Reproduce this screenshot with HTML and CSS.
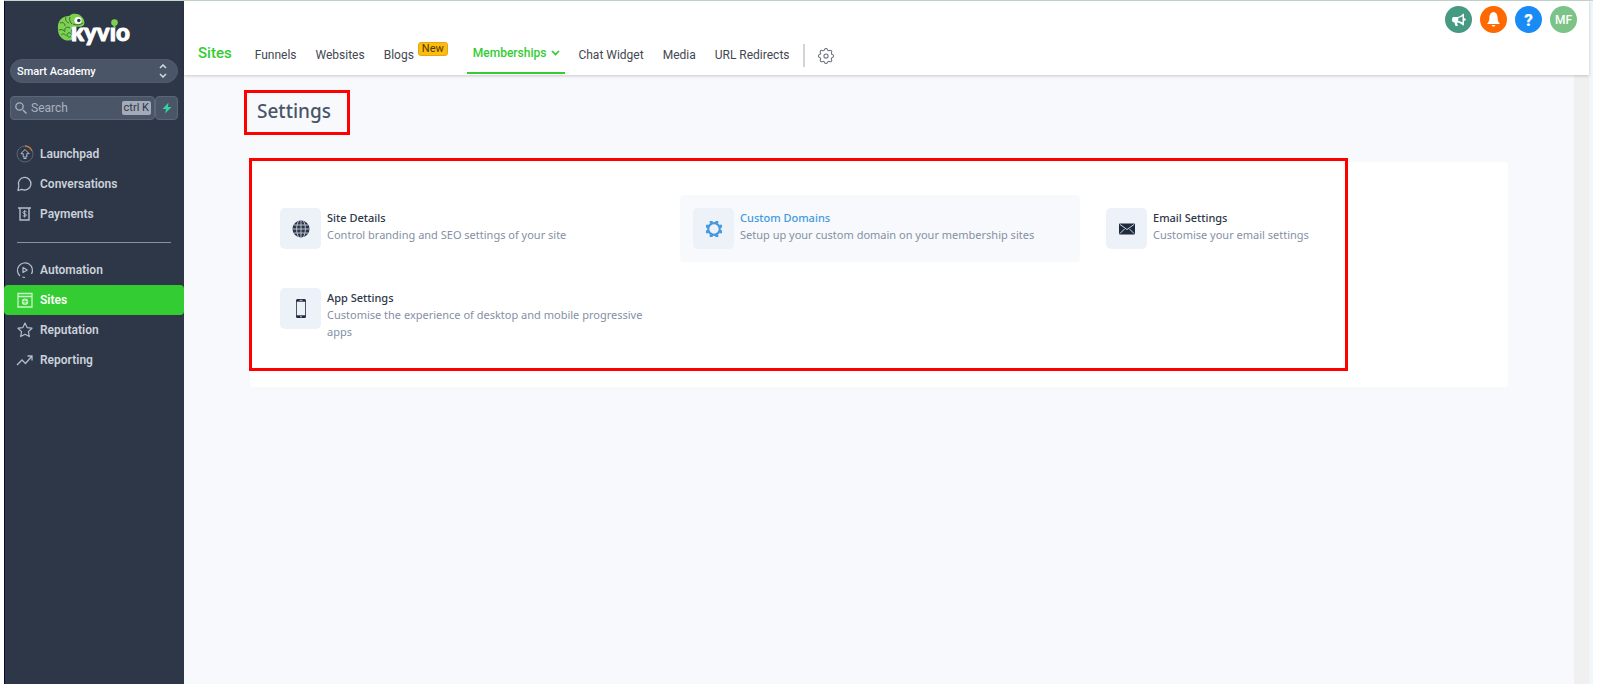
FILE: index.html
```html
<!DOCTYPE html>
<html lang="en">
<head>
<meta charset="utf-8">
<meta name="viewport" content="width=device-width, initial-scale=1">
<title>Kyvio – Settings</title>
<link rel="stylesheet" href="styles.css">
</head>
<body>
<div class="app">
  <aside class="sidebar">
    <a class="logo" href="#" aria-label="kyvio home">
      <svg width="76" height="36" viewBox="0 0 76 36">
        <path d="M14 3C5 2 0 8 1 16c0 5 2 8 5 10 3 2 7 2 10 0l-2-9 5-4z" fill="#7fd04f"/>
        <path d="M3 10c3-1 5 0 5 3M9 4c-1 3 0 5 3 6M2 17c3-1 5 0 6 2M13 15c-3-2-6 0-5 3M4 22c2-2 4-1 5 1M15 22c-1-3-5-3-5 0 0 2 3 3 4 1" fill="none" stroke="#37703d" stroke-width="1"/>
        <text class="logo-text" x="14" y="28">kyvio</text>
        <path d="M12 3l3-2c4-1 8 0 10 3 2 2 3 5 2 8-2 2-5 2-8 1.500L12 14z" fill="#7fd04f"/>
        <path d="M16 11c4 1.500 7 1 10-1M13 4c-1 3 0 5 2 7" fill="none" stroke="#37703d" stroke-width="1"/>
        <circle cx="21" cy="7.500" r="3.600" fill="#fff"/><circle cx="21.800" cy="7.500" r="1.800" fill="#2d3748"/>
        <rect class="logo-mask" x="52" y="7" width="11" height="7"/>
        <circle cx="57.500" cy="9.500" r="3.300" fill="#7fd04f"/><path d="M57.500 11v4" stroke="#7fd04f" stroke-width="2"/>
      </svg>
    </a>
    <div class="account">
      <select class="account-select" aria-label="Account"><option>Smart Academy</option></select>
      <svg class="account-arrows" width="8" height="14" viewBox="0 0 8 14"><path d="M1 4l3-3 3 3M1 10l3 3 3-3" fill="none" stroke="currentColor" stroke-width="1.5"/></svg>
    </div>
    <div class="search-row">
      <label class="search">
        <svg width="12" height="12" viewBox="0 0 12 12"><path d="M8 8l3.500 3.500" stroke="currentColor" stroke-width="1.500"/><circle cx="4.500" cy="4.500" r="3.700" fill="none" stroke="currentColor" stroke-width="1.300"/></svg>
        <input class="search-input" type="text" placeholder="Search" aria-label="Search">
        <kbd class="shortcut">ctrl K</kbd>
      </label>
      <button class="bolt" type="button" aria-label="Quick actions">
        <svg width="10" height="12" viewBox="0 0 10 12"><path d="M6.500.5L.5 7h3.500l-.8 4.500L9.500 5H6z" fill="#34d399"/></svg>
      </button>
    </div>
    <nav class="menu" aria-label="Main">
      <a class="menu-item" href="#">
        <svg width="18" height="18" viewBox="0 0 18 18" fill="none"><circle cx="9" cy="9" r="8" stroke="#5a6475"/><path d="M9 1a8 8 0 0 1 7 5" stroke="#c47a3e" stroke-width="1.300"/><path d="M9 4.500L4.800 8.700h2.400v3.300h3.600V8.700h2.400zM7.500 13.500h3" stroke="currentColor"/></svg>
        Launchpad</a>
      <a class="menu-item" href="#">
        <svg width="18" height="18" viewBox="0 0 18 18" fill="none"><path d="M2 15.500l.8-4.500a6.300 6.300 0 1 1 3 3.300z" stroke="currentColor" stroke-width="1.300" stroke-linejoin="round"/></svg>
        Conversations</a>
      <a class="menu-item" href="#">
        <svg width="18" height="18" viewBox="0 0 18 18" fill="none"><path d="M2 3h13M4 3v12h9V3" stroke="currentColor" stroke-width="1.400"/><path d="M10.500 6.800c-1-.9-3.600-.6-3.600.8 0 1.600 3.500.8 3.500 2.400 0 1.400-2.500 1.600-3.600.6M8.600 5.200v7.200" stroke="currentColor"/></svg>
        Payments</a>
      <hr class="menu-rule">
      <a class="menu-item" href="#">
        <svg width="18" height="18" viewBox="0 0 18 18" fill="none"><path d="M4 15A7.500 7.500 0 1 1 15.500 13M6.500 16.200l2.500.3" stroke="currentColor" stroke-width="1.200"/><path d="M7 6.500v5l4.200-2.500z" stroke="currentColor" stroke-width="1.200" stroke-linejoin="round"/></svg>
        Automation</a>
      <a class="menu-item active" href="#" aria-current="page">
        <svg width="18" height="18" viewBox="0 0 18 18" fill="none"><path d="M2 2.500h14v13.500H2zM2 5.500h14" stroke="currentColor" stroke-width="1.300"/><circle cx="9" cy="10.700" r="3.200" fill="currentColor"/><path d="M6.500 10.700h5M9 8.500v4.400" stroke="#3c3" stroke-width=".8"/></svg>
        Sites</a>
      <a class="menu-item" href="#">
        <svg width="18" height="18" viewBox="0 0 18 18" fill="none"><path d="M9 2l2.100 4.600 4.900.6-3.600 3.400.9 5L9 13.200l-4.300 2.400.9-5L2 7.200l4.900-.6z" stroke="currentColor" stroke-width="1.200" stroke-linejoin="round"/></svg>
        Reputation</a>
      <a class="menu-item" href="#">
        <svg width="18" height="18" viewBox="0 0 18 18" fill="none"><path d="M1 14l5-5 3.500 3.500L16 5M11.500 5H16v4.500" stroke="currentColor" stroke-width="1.300"/></svg>
        Reporting</a>
    </nav>
  </aside>

  <div class="page">
    <header class="topbar">
      <nav class="tabs" aria-label="Sites">
        <a class="tabs-title" href="#">Sites</a>
        <a class="tab" href="#">Funnels</a>
        <a class="tab" href="#">Websites</a>
        <a class="tab" href="#">Blogs<span class="badge">New</span></a>
        <a class="tab selected" href="#" aria-current="page">Memberships
          <svg width="9" height="6" viewBox="0 0 9 6"><path d="M1 1l3.500 3.500L8 1" fill="none" stroke="currentColor" stroke-width="1.700"/></svg></a>
        <a class="tab" href="#">Chat Widget</a>
        <a class="tab" href="#">Media</a>
        <a class="tab" href="#">URL Redirects</a>
        <span class="tabs-rule"></span>
        <button class="gear" type="button" aria-label="Site settings">
          <svg width="20" height="20" viewBox="0 0 24 24" fill="none" stroke="currentColor" stroke-width="1.300" stroke-linejoin="round"><path d="M10.300 4.300c.4-1.700 3-1.700 3.400 0a1.700 1.700 0 0 0 2.600 1.100c1.500-1 3.300.8 2.400 2.400a1.700 1.700 0 0 0 1 2.500c1.800.4 1.800 3 0 3.400a1.700 1.700 0 0 0-1 2.600c.9 1.500-.9 3.300-2.400 2.400a1.700 1.700 0 0 0-2.600 1c-.4 1.800-3 1.800-3.400 0a1.700 1.700 0 0 0-2.600-1c-1.500.9-3.300-.9-2.400-2.400a1.700 1.700 0 0 0-1-2.600c-1.800-.4-1.800-3 0-3.400a1.700 1.700 0 0 0 1-2.500c-.9-1.600.9-3.400 2.400-2.400 1 .6 2.300.1 2.600-1.100z"/><circle cx="12" cy="12" r="2.500"/></svg>
        </button>
      </nav>
      <div class="actions">
        <button class="round news" type="button" aria-label="Announcements">
          <svg width="15" height="14" viewBox="0 0 15 14"><path d="M13 .8v11.400l-1 .3C10 10.500 8 9.700 6 9.500l.8 3.500H4.500L3.300 9.300H2.500C.5 9.300.5 4 2.500 4H6c2.500-.2 4.500-1.300 6-3.200z" fill="#fff"/><path d="M11.500 3.300v6.200C10 8.500 8.800 8 7.300 7.900v-3c1.600-.2 2.900-.7 4.200-1.600z" fill="#459a81"/><circle cx="13.500" cy="6.500" r="1.200" fill="#fff"/></svg>
        </button>
        <button class="round alerts" type="button" aria-label="Notifications">
          <svg width="15" height="17" viewBox="0 0 15 17"><path d="M7.500 1C4.500 1.300 3.500 4 3.400 7 3.300 10 2.500 11 1 13h13c-1.500-2-2.300-3-2.400-6-.1-3-1.100-5.700-4.100-6zM5.700 14h3.600c-.2 2.300-3.400 2.300-3.600 0z" fill="#fff"/></svg>
        </button>
        <button class="round help" type="button" aria-label="Help">?</button>
        <button class="round user" type="button" aria-label="Profile">MF</button>
      </div>
    </header>

    <div class="body">
      <main class="content">
        <h1 class="title">Settings</h1>
        <section class="card">
          <a class="option" href="#">
            <span class="tile"><svg width="18" height="18" viewBox="0 0 18 18"><circle cx="9" cy="9" r="8.500" fill="#2d3748"/><path d="M.5 9h17M9 .5v17M2 5h14M2 13h14M6.500 1C4 6 4 12 6.500 17M11.500 1c2.500 5 2.500 11 0 16" fill="none" stroke="#b9c1ce" stroke-width="1"/></svg></span>
            <span class="option-text"><b class="option-name">Site Details</b><span class="option-desc">Control branding and SEO settings of your site</span></span>
          </a>
          <a class="option hover" href="#">
            <span class="tile"><svg width="18" height="18" viewBox="-9 -9 18 18"><circle r="5.800" fill="none" stroke="#4299e1" stroke-width="2.200"/><path d="M-2.800-6V-8M2.800-6V-8M-2.800 6V8M2.800 6V8M-6-2.800H-8M-6 2.800H-8M6-2.800H8M6 2.800H8" stroke="#4299e1" stroke-width="3"/></svg></span>
            <span class="option-text"><b class="option-name">Custom Domains</b><span class="option-desc">Setup up your custom domain on your membership sites</span></span>
          </a>
          <a class="option" href="#">
            <span class="tile"><svg width="16" height="12" viewBox="0 0 16 12"><rect width="16" height="11" y=".5" rx="1" fill="#1f2b3d"/><path d="M1 1.500l7 5 7-5M1 10.500l4.500-4.500M15 10.500L10.500 6" fill="none" stroke="#cbd5e0" stroke-width="1"/></svg></span>
            <span class="option-text"><b class="option-name">Email Settings</b><span class="option-desc">Customise your email settings</span></span>
          </a>
          <a class="option" href="#">
            <span class="tile"><svg width="10" height="19" viewBox="0 0 10 19"><path d="M.5 2h9v15h-9z" fill="none" stroke="#4a5568"/><path d="M0 2.500V1.500Q0 0 1.500 0h7Q10 0 10 1.500v1zM0 16.500h10v1Q10 19 8.500 19h-7Q0 19 0 17.500z" fill="#1f2b3d"/><path d="M3.500 1.300h3M4 17.800h2" stroke="#edf2f7" stroke-width=".8"/></svg></span>
            <span class="option-text"><b class="option-name">App Settings</b><span class="option-desc">Customise the experience of desktop and mobile progressive apps</span></span>
          </a>
          <span class="highlight"></span>
        </section>
      </main>
      <div class="scroll-track"></div>
    </div>
  </div>
</div>
</body>
</html>
```
FILE: styles.css
```css
* { box-sizing: border-box; }
body { margin: 0; background: #fff; font-family: Roboto, "Liberation Sans", sans-serif; font-size: 12px; }
a { color: inherit; text-decoration: none; }
button { border: 0; padding: 0; font: inherit; cursor: pointer; }
svg { flex: none; display: block; }

.app {
  display: flex;
  min-height: 100vh;
  margin: 0 7px 0 4px;
  border-top: 1px solid #c5d8cb;
}

/* Sidebar */
.sidebar { flex: none; width: 180px; background: #2d3748; border-left: 1px solid #060a2c; color: #cbd1da; }
.logo { display: flex; justify-content: center; padding: 12px 0 0 0; }
.logo-text { font-family: Lato, sans-serif; font-weight: 900; font-size: 24px; fill: #fff; stroke: #fff; stroke-width: 1px; stroke-linejoin: round; }
.logo-mask { fill: #2d3748; }
.account { position: relative; margin: 10px 6px 0 5px; }
.account-select {
  appearance: none; width: 100%; height: 24px; padding: 0 24px 0 6px;
  border: 1px solid #505b6b; border-radius: 12px; background: #4a5568;
  color: #fff; font: 500 11px Roboto, sans-serif;
}
.account-arrows { position: absolute; right: 11px; top: 5px; color: #d5dae1; pointer-events: none; }
.search-row { display: flex; margin: 13px 6px 0 5px; }
.search {
  flex: 1; min-width: 0; display: flex; align-items: center; gap: 4px;
  height: 24px; padding: 0 3px 0 4px; border: 1px solid #5b6677; border-radius: 4px;
  background: #4a5568; color: #a9b2bf;
}
.search-input { flex: 1; min-width: 0; padding: 0; border: 0; background: none; color: #fff; font: 12px Roboto, sans-serif; }
.search-input::placeholder { color: #a9b2bf; opacity: 1; }
.shortcut { padding: 0 2px; border-radius: 2px; background: #a3aab8; color: #2d3748; font: 11px/14px Roboto, sans-serif; }
.bolt { display: grid; place-items: center; width: 23px; height: 24px; border: 1px solid #5b6677; border-radius: 4px; background: #4a5568; }
.menu { padding-top: 19px; }
.menu-item { display: flex; align-items: center; gap: 6px; height: 30px; margin-left: -1px; padding-left: 12px; font-weight: 600; }
.menu-item svg { color: #b3bcc9; }
.menu-item.active { background: #3c3; border-radius: 4px; color: #fff; }
.menu-item.active svg { color: #c9f5c9; }
.menu-rule { margin: 13px 13px 12px 12px; border: 0; border-top: 1px solid #8793a5; }

/* Top bar */
.page { flex: 1; min-width: 0; display: flex; flex-direction: column; background: #f0f7fb; }
.topbar {
  position: relative; display: flex; justify-content: space-between; height: 74px;
  margin-right: 4px; padding: 0 12px 0 14px; background: #fff; box-shadow: 0 1px 3px #0003;
}
.tabs { display: flex; align-items: flex-end; gap: 19px; color: #43474f; white-space: nowrap; }
.tabs-title { margin-right: 4px; color: #3c3; font-size: 15px; line-height: 44px; font-weight: 500; }
.tab { display: flex; align-items: center; height: 41px; }
.badge { margin: 0 0 11px 4px; padding: 0 3px; border: 1px solid #e0a818; border-radius: 3px; background: #ffbc0b; color: #4d3a08; font-size: 11px; line-height: 12px; }
.tab.selected { gap: 5px; height: 41px; margin: 0 -6px 1px 0; padding: 0 5px 0 6px; border-bottom: 2px solid #3c3; color: #3c3; font-weight: 500; }
.tabs-rule { width: 2px; height: 23px; margin: 0 -8px 8px -6px; background: #d2d4d8; }
.gear { margin-bottom: 9px; background: none; color: #6d727b; }
.actions { display: flex; gap: 8px; padding-top: 5px; }
.round { display: grid; place-items: center; width: 27px; height: 27px; border-radius: 50%; color: #fff; font-weight: 500; }
.news { background: #459a81; }
.alerts { background: #ff6900; }
.help { background: #188bf6; font-size: 17px; font-weight: 900; }
.user { background: #7bc387; }

/* Content */
.body { flex: 1; display: flex; margin-right: 4px; }
.content { flex: 1; min-width: 0; padding: 15px 66px 40px; background: #f7f9fc; font-family: "Noto Sans", "Open Sans", sans-serif; }
.scroll-track { width: 15px; background: #f0f0f0; }
.title {
  width: fit-content; margin: 0 0 27px -6px; padding: 4px 16px 7px 10px;
  border: 3px solid #f00; color: #4a5568; font-size: 19px; line-height: 28px; font-weight: 500;
}
.card {
  position: relative; display: grid; grid-template-columns: repeat(3, minmax(0, 1fr)); gap: 13px;
  padding: 33px 15px 34px 17px; background: #fff; border-radius: 4px;
}
.option { display: flex; align-items: flex-start; gap: 6px; padding: 13px; border-radius: 4px; }
.option.hover { background: #f7f9fc; }
.tile { flex: none; display: grid; place-items: center; width: 41px; height: 41px; border-radius: 5px; background: #edf1f8; }
.option-text { display: flex; flex-direction: column; min-width: 0; padding-top: 1px; font-size: 11px; line-height: 17px; }
.option-name { color: #2d3748; font-weight: 500; }
.option.hover .option-name { color: #4299e1; }
.option-desc { color: #8590a5; }
.highlight { position: absolute; top: -4px; bottom: 16px; left: -1px; right: 160px; border: 3px solid #f00; pointer-events: none; }
```
